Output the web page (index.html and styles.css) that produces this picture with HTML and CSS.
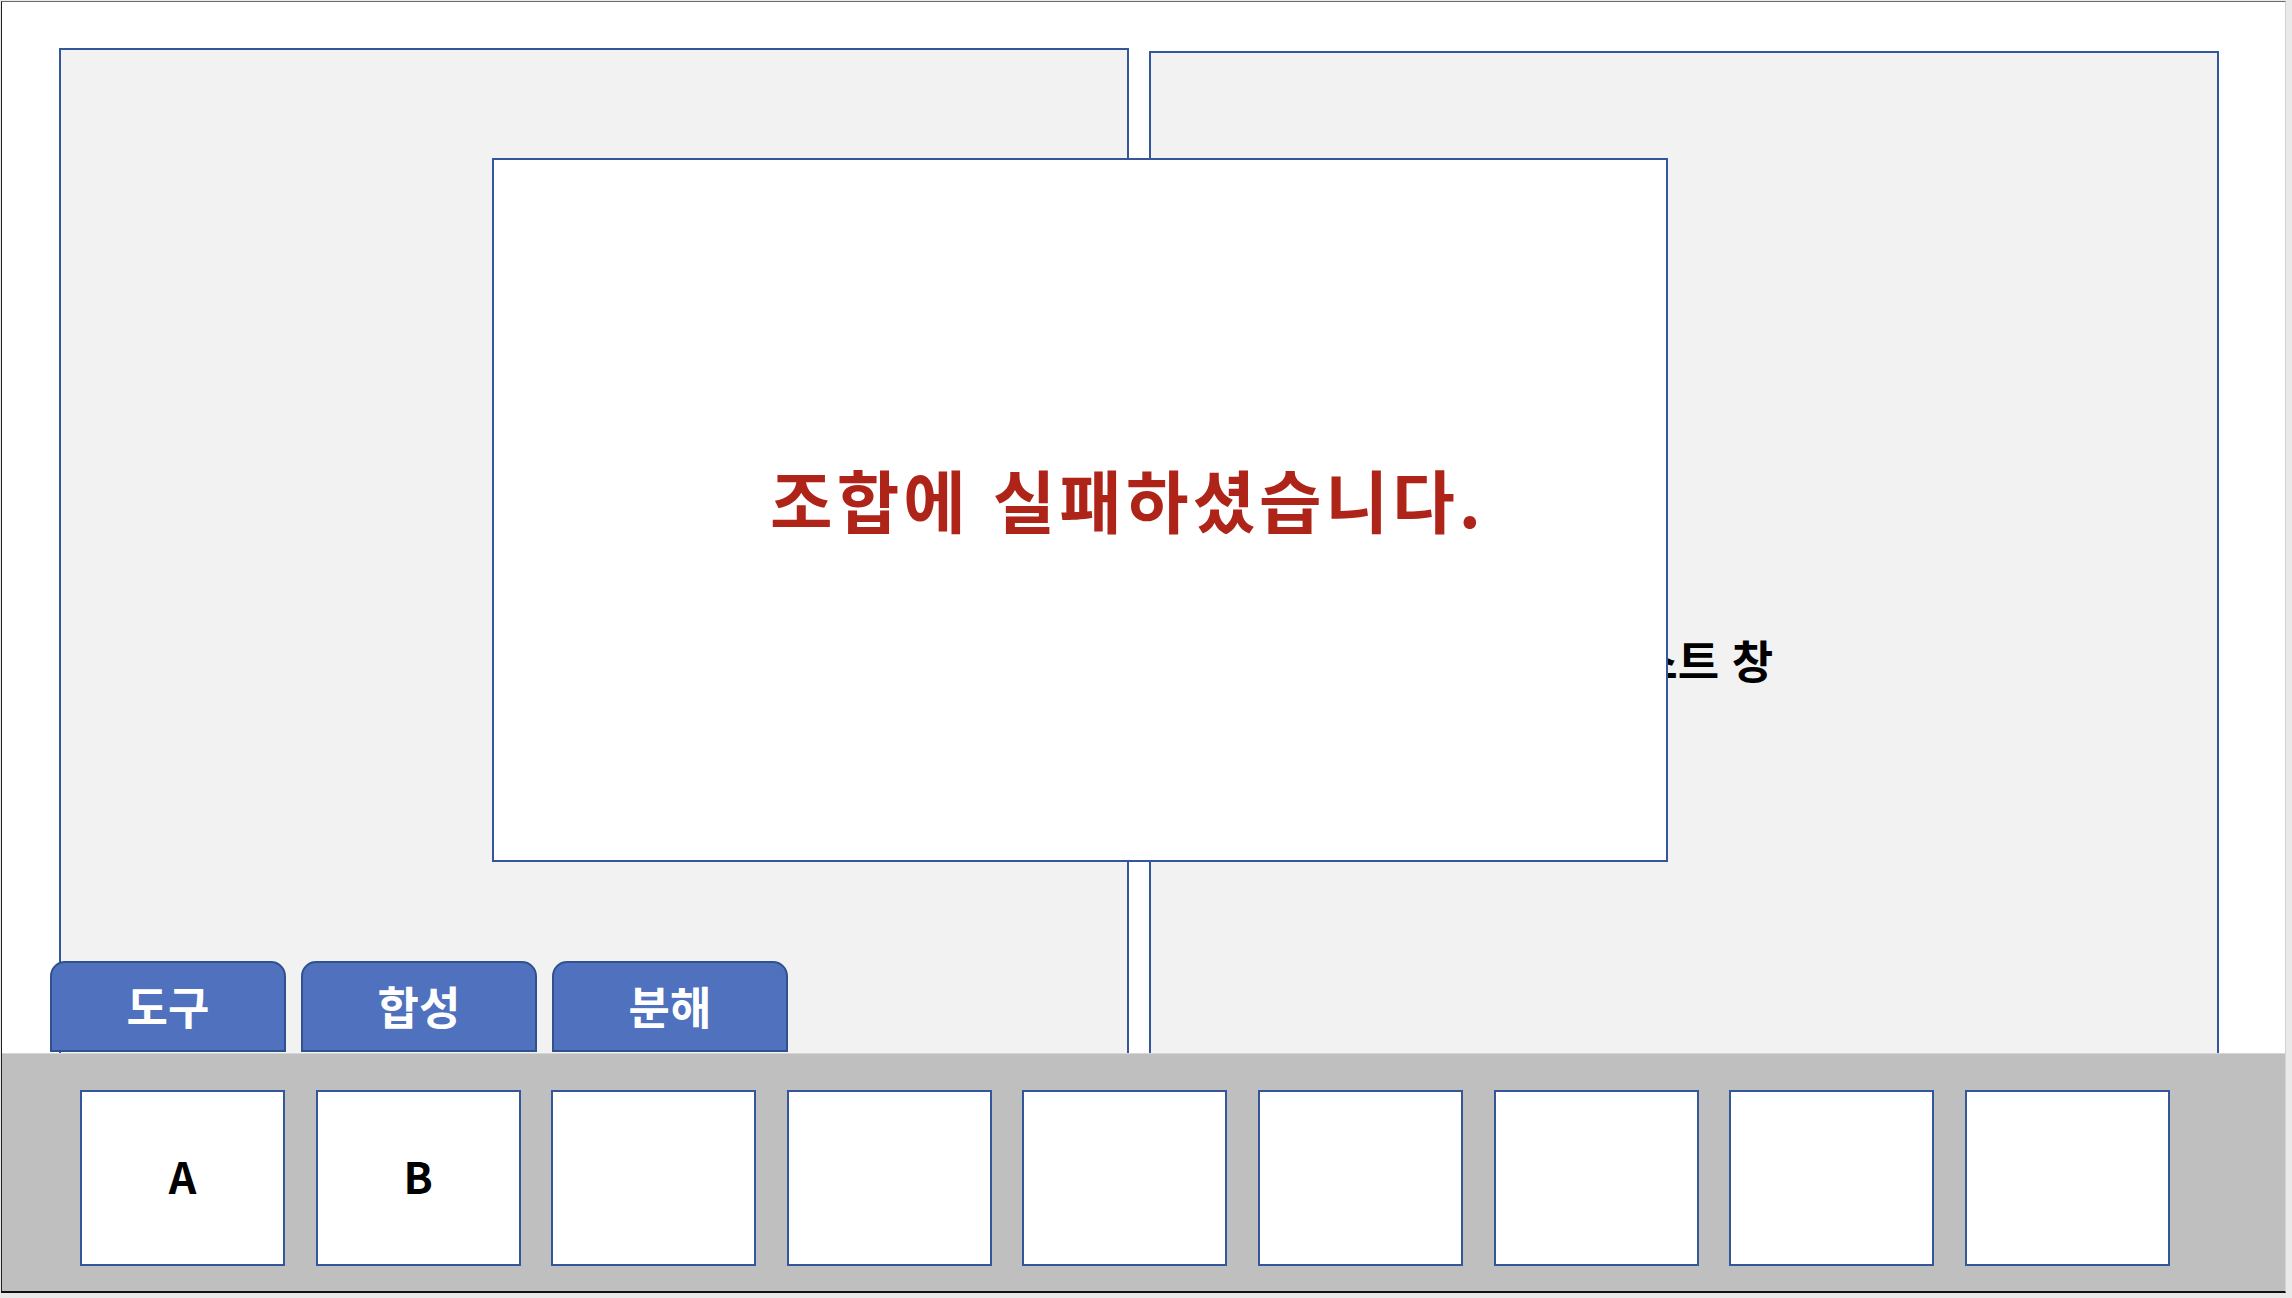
FILE: index.html
```html
<!DOCTYPE html>
<html lang="ko">
<head>
<meta charset="utf-8">
<title>조합</title>
<link rel="stylesheet" href="styles.css">
</head>
<body>
<div class="slide">
  <div class="workspace">
    <div class="panel panel-left"></div>
    <div class="panel panel-right"><span class="panel-label">리스트 창</span></div>
  </div>
  <div class="tabs">
    <div class="tab">도구</div>
    <div class="tab">합성</div>
    <div class="tab">분해</div>
  </div>
  <div class="inventory">
    <div class="slot">A</div>
    <div class="slot">B</div>
    <div class="slot"></div>
    <div class="slot"></div>
    <div class="slot"></div>
    <div class="slot"></div>
    <div class="slot"></div>
    <div class="slot"></div>
    <div class="slot"></div>
  </div>
  <div class="dialog">
    <p class="dialog-message">조합에 실패하셨습니다.</p>
  </div>
</div>
</body>
</html>
```

FILE: styles.css
```css
* {
  box-sizing: border-box;
}

html, body {
  margin: 0;
  padding: 0;
}

body {
  width: 2292px;
  height: 1298px;
  background: #e9e9e9;
  font-family: "Noto Sans CJK KR", "Noto Sans", sans-serif;
  overflow: hidden;
}

.slide {
  position: relative;
  margin: 1px 0 0 1px;
  width: 2285px;
  height: 1292px;
  background: #ffffff;
  border-left: 1px solid #1e1e1e;
  border-top: 1px solid #6a6a6a;
  border-bottom: 2px solid #111111;
  border-right: 1px solid #d2d2d2;
  display: flex;
  flex-direction: column;
  overflow: hidden;
}

.workspace {
  height: 1051px;
  flex: none;
  display: flex;
  align-items: stretch;
  gap: 20px;
  padding: 46px 0 0 57px;
}

.panel {
  width: 1070px;
  background: #f2f2f2;
  border: 2px solid #34569a;
  border-bottom: none;
}

.panel-right {
  margin-top: 3px;
  display: flex;
  justify-content: center;
  align-items: flex-start;
  padding-top: 580px;
}

.panel-label {
  font-size: 45px;
  font-weight: 700;
  line-height: 54px;
  color: #000000;
}

.tabs {
  position: absolute;
  left: 48px;
  top: 959px;
  display: flex;
  gap: 15px;
}

.tab {
  width: 236px;
  height: 91px;
  background: #4f71be;
  border: 2px solid #2f528f;
  border-radius: 15px 15px 0 0;
  color: #ffffff;
  font-size: 45px;
  font-weight: 700;
  display: flex;
  align-items: center;
  justify-content: center;
  padding-bottom: 2px;
}

.inventory {
  flex: 1;
  background: #bfbfbf;
  border-top: 1px solid #d6d6d6;
  display: flex;
  align-items: flex-start;
  gap: 30.6px;
  padding: 36px 0 0 78px;
}

.slot {
  width: 205px;
  height: 176px;
  flex: none;
  background: #ffffff;
  border: 2px solid #34569a;
  display: flex;
  align-items: center;
  justify-content: center;
  padding-bottom: 6px;
  font-size: 43px;
  font-weight: 700;
  color: #000000;
}

.dialog {
  position: absolute;
  left: 490px;
  top: 156px;
  width: 1176px;
  height: 704px;
  background: #ffffff;
  border: 2px solid #34569a;
  display: flex;
  align-items: center;
  justify-content: center;
  padding: 0 0 23px 95px;
}

.dialog-message {
  margin: 0;
  font-size: 68px;
  font-weight: 700;
  color: #af2418;
  line-height: 1.2;
  letter-spacing: 4px;
}
```
